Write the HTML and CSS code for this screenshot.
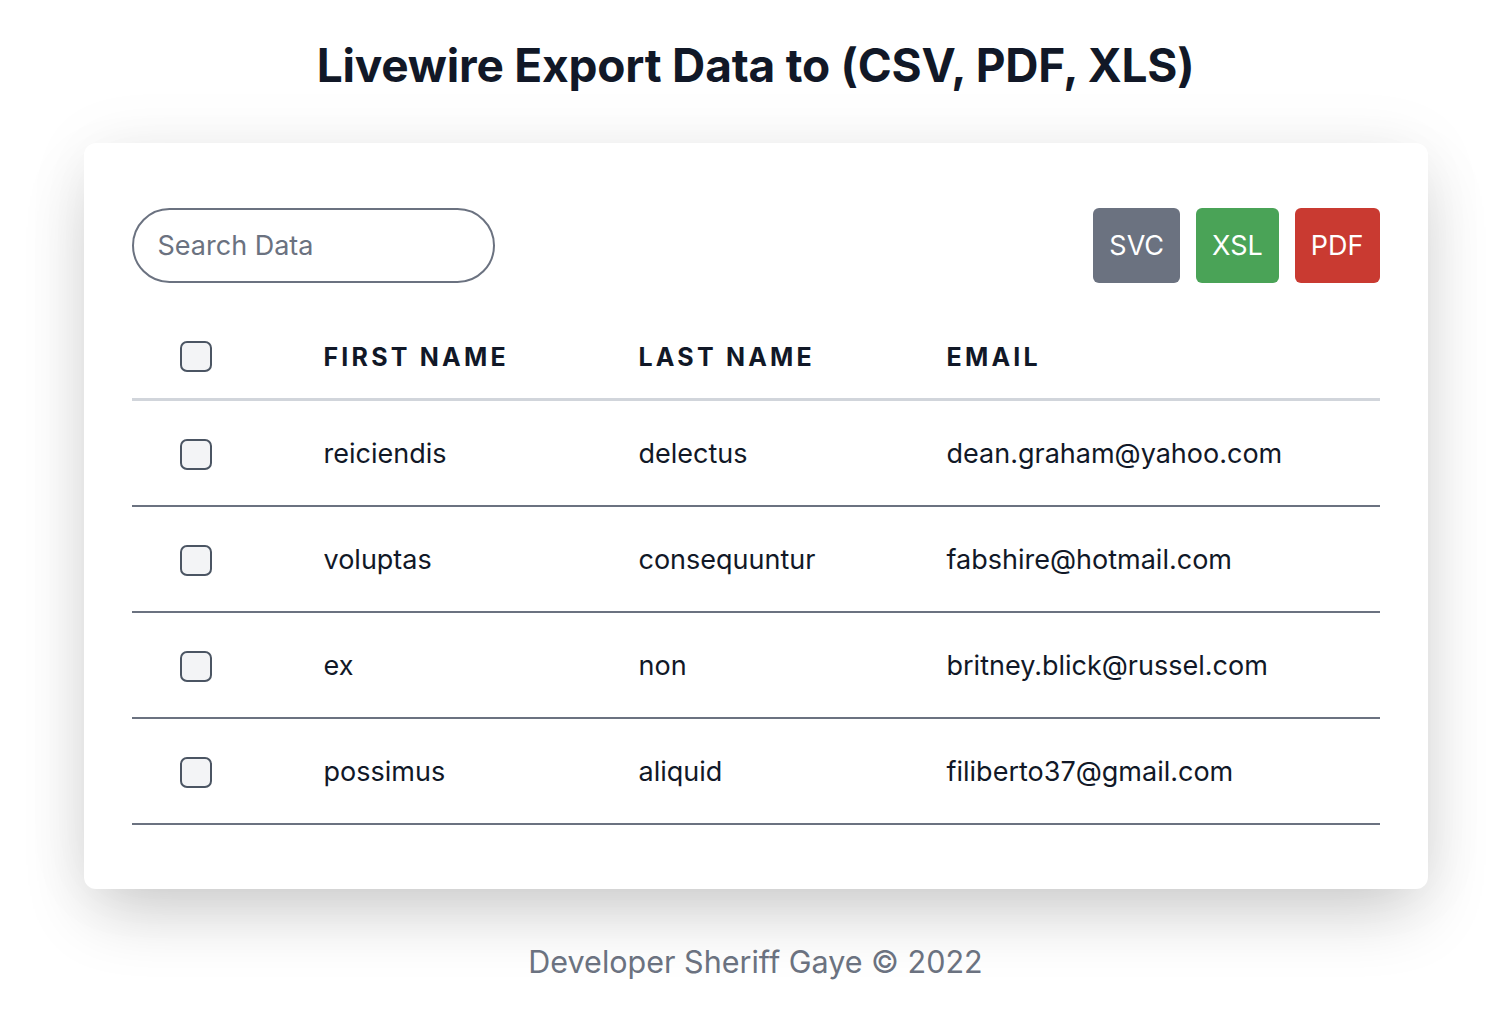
FILE: index.html
```html
<!DOCTYPE html>
<html lang="en">
<head>
<meta charset="utf-8">
<title>Livewire Export Data</title>
<link rel="stylesheet" href="styles.css">
</head>
<body>
<main class="page">
  <h1 class="title">Livewire Export Data to (CSV, PDF, XLS)</h1>
  <section class="card">
    <div class="toolbar">
      <input class="search" type="text" placeholder="Search Data">
      <div class="actions">
        <button class="btn btn-gray">SVC</button>
        <button class="btn btn-green">XSL</button>
        <button class="btn btn-red">PDF</button>
      </div>
    </div>
    <div class="table">
      <div class="row head">
        <div class="cell"><span class="check"></span></div>
        <div class="cell">FIRST NAME</div>
        <div class="cell">LAST NAME</div>
        <div class="cell">EMAIL</div>
      </div>
      <div class="row">
        <div class="cell"><span class="check"></span></div>
        <div class="cell">reiciendis</div>
        <div class="cell">delectus</div>
        <div class="cell">dean.graham@yahoo.com</div>
      </div>
      <div class="row">
        <div class="cell"><span class="check"></span></div>
        <div class="cell">voluptas</div>
        <div class="cell">consequuntur</div>
        <div class="cell">fabshire@hotmail.com</div>
      </div>
      <div class="row">
        <div class="cell"><span class="check"></span></div>
        <div class="cell">ex</div>
        <div class="cell">non</div>
        <div class="cell">britney.blick@russel.com</div>
      </div>
      <div class="row">
        <div class="cell"><span class="check"></span></div>
        <div class="cell">possimus</div>
        <div class="cell">aliquid</div>
        <div class="cell">filiberto37@gmail.com</div>
      </div>
    </div>
  </section>
  <footer class="footer">Developer Sheriff Gaye © 2022</footer>
</main>
</body>
</html>
```
FILE: styles.css
```css
* { box-sizing: border-box; }
html, body { margin: 0; padding: 0; background: #ffffff; }
body {
  font-family: Inter, "Noto Sans", "Liberation Sans", sans-serif;
  color: #111827;
}
.page {
  display: flex;
  flex-direction: column;
  align-items: center;
  padding-top: 36px;
  padding-left: 2px;
}
.title {
  margin: 0;
  font-size: 46px;
  line-height: 58px;
  font-weight: 700;
  color: #111827;
  letter-spacing: -0.2px;
}
.card {
  margin-top: 49px;
  width: 1344px;
  background: #ffffff;
  border-radius: 12px;
  box-shadow: 0 30px 70px -10px rgba(0,0,0,0.2), 0 0 70px rgba(0,0,0,0.05);
  padding: 65px 48px 64px;
}
.toolbar {
  display: flex;
  justify-content: space-between;
  align-items: center;
}
.search {
  width: 363px;
  height: 75px;
  border: 2px solid #6b7280;
  border-radius: 40px;
  padding: 0 24px;
  font-family: inherit;
  font-size: 27px;
  color: #111827;
  outline: none;
  background: #fff;
}
.search::placeholder { color: #6b7280; }
.actions { display: flex; gap: 16px; }
.btn {
  height: 75px;
  padding: 0 16px;
  border: 0;
  border-radius: 6px;
  color: #ffffff;
  font-family: inherit;
  font-size: 27px;
  font-weight: 400;
}
.btn-gray { background: #6b7280; }
.btn-green { background: #4aa357; }
.btn-red { background: #c93a31; }
.table { margin-top: 32px; }
.row {
  display: grid;
  grid-template-columns: 144px 315px 308px 1fr;
  align-items: center;
  height: 106px;
  border-bottom: 2px solid #6b7280;
  font-size: 27px;
  color: #111827;
}
.row.head {
  height: 86px;
  border-bottom: 3px solid #d1d5db;
  font-size: 25px;
  font-weight: 700;
  letter-spacing: 3.2px;
}
.cell { padding-left: 48px; }
.check {
  display: block;
  width: 32px;
  height: 31px;
  margin-top: 2px;
  border: 2px solid #4b5563;
  border-radius: 7px;
  background: #f3f4f6;
}
.row.head .check { margin-top: 0; }
.footer {
  margin-top: 54px;
  font-size: 30.5px;
  color: #6b7280;
}
```
